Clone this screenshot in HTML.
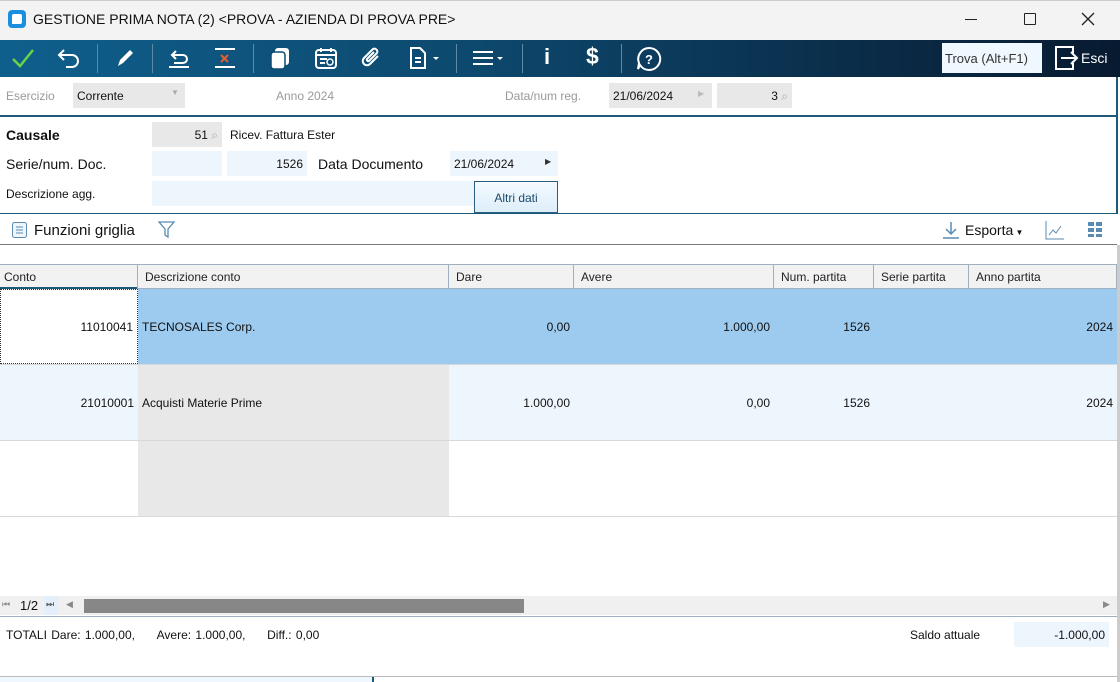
<!DOCTYPE html>
<html><head><meta charset="utf-8"><style>
*{box-sizing:border-box;margin:0;padding:0}
body{width:1120px;height:682px;overflow:hidden;background:#fff;font-family:"Liberation Sans",sans-serif;font-size:12px;color:#111;position:relative}
.a{position:absolute}
.tb{left:0;top:40px;width:1120px;height:37px;background:linear-gradient(90deg,#0f5f8c 0%,#0d4a70 40%,#0a2a45 80%,#081a30 100%)}
.sep{position:absolute;top:4px;width:1px;height:29px;background:#5f8aa6}
.ic{position:absolute;top:6px;color:#fff}
.cell{position:absolute;height:100%;border-right:1px solid #cfcfcf;padding:0 4px;display:flex;align-items:center}
.hd{top:264px;height:25px;left:0;width:1117px;background:#f2f2f2;border-top:1px solid #9fb0c0;border-bottom:1px solid #9fb0c0}
.hd .cell{border-right:1px solid #9fb0c0;color:#222}
.r{left:0;width:1117px;height:76px;border-bottom:1px solid #d8d8d8}
.r .cell{border-right:none}
.R{justify-content:flex-end}
</style></head><body>
<div class="a" style="left:0;top:0;width:1120px;height:40px;background:#f3f3f3;border-top:1px solid #ccc"></div>
<div class="a" style="left:8px;top:10px;width:18px;height:18px;border-radius:4px;background:#1a8fe0"><div style="margin:4px;width:10px;height:10px;background:#fff;border-radius:2px 2px 2px 0"></div></div>
<div class="a" style="left:33px;top:11px;font-size:14px;color:#111">GESTIONE PRIMA NOTA (2) &lt;PROVA - AZIENDA DI PROVA PRE&gt;</div>
<div class="a" style="left:965px;top:19px;width:12px;height:1px;background:#222"></div>
<div class="a" style="left:1024px;top:13px;width:12px;height:12px;border:1.5px solid #222;border-radius:1px"></div>
<svg class="a" style="left:1081px;top:12px" width="14" height="14"><path d="M1 1L13 13M13 1L1 13" stroke="#222" stroke-width="1.3"/></svg>
<div class="a tb">
<svg class="ic" style="left:10px" width="26" height="24"><path d="M3 13l7 7L23 4" stroke="#6cd24a" stroke-width="2.5" fill="none"/></svg>
<svg class="ic" style="left:56px" width="26" height="24"><path d="M8 6L3 11l5 5M3 11h13a6 6 0 0 1 0 12h-6" stroke="#fff" stroke-width="2" fill="none" transform="translate(0,-2)"/></svg>
<div class="sep" style="left:97px"></div>
<svg class="ic" style="left:113px" width="24" height="24"><path d="M5 20l2-6L17 4l3 3L10 17z" fill="#fff"/></svg>
<div class="sep" style="left:152px"></div>
<svg class="ic" style="left:166px" width="26" height="24"><path d="M10 5L6 9l4 4M6 9h11a4 4 0 0 1 0 8H8M3 21h20" stroke="#fff" stroke-width="2" fill="none"/></svg>
<svg class="ic" style="left:212px" width="26" height="24"><path d="M3 3h20M3 21h20" stroke="#fff" stroke-width="2"/><path d="M9 9l7 7M16 9l-7 7" stroke="#e85d2a" stroke-width="2"/></svg>
<div class="sep" style="left:253px"></div>
<svg class="ic" style="left:268px" width="24" height="24"><rect x="7" y="2" width="14" height="17" rx="3" fill="#fff"/><rect x="3" y="6" width="14" height="17" rx="3" fill="#fff" stroke="#0d4a70" stroke-width="1.5"/></svg>
<svg class="ic" style="left:313px" width="26" height="24"><rect x="3" y="4" width="20" height="18" rx="3" stroke="#fff" stroke-width="2" fill="none"/><path d="M3 9h20M8 2v4M18 2v4M7 13h7M7 17h5" stroke="#fff" stroke-width="2"/><circle cx="17" cy="16" r="3" stroke="#fff" stroke-width="1.5" fill="none"/></svg>
<svg class="ic" style="left:360px" width="24" height="24"><path d="M18 10l-8 8a4 4 0 0 1-6-6l9-9a3 3 0 0 1 4 4l-8 8a1.5 1.5 0 0 1-2-2l7-7" stroke="#fff" stroke-width="2" fill="none"/></svg>
<svg class="ic" style="left:407px" width="36" height="24"><path d="M4 2h9l5 5v15H4z" stroke="#fff" stroke-width="2" fill="none"/><path d="M8 12h6M8 16h6" stroke="#fff" stroke-width="2"/><path d="M26 11h6l-3 3z" fill="#fff"/></svg>
<div class="sep" style="left:456px"></div>
<svg class="ic" style="left:471px" width="36" height="24"><path d="M2 6h20M2 12h20M2 18h20" stroke="#fff" stroke-width="2"/><path d="M26 11h6l-3 3z" fill="#fff"/></svg>
<div class="sep" style="left:522px"></div>
<div class="ic" style="left:544px;top:4px;font-size:22px;font-weight:bold">i</div>
<div class="ic" style="left:586px;top:3px;font-size:23px;font-weight:bold">$</div>
<div class="sep" style="left:621px"></div>
<svg class="ic" style="left:636px" width="26" height="26"><path d="M13 2a11 11 0 1 1-9 17l-2 4 1-6A11 11 0 0 1 13 2z" stroke="#fff" stroke-width="2" fill="none"/><text x="9" y="18" fill="#fff" font-size="13" font-weight="bold" font-family="Liberation Sans">?</text></svg>
<div class="a" style="left:942px;top:3px;width:100px;height:30px;background:#f0f8ff;color:#333;font-size:13px;padding:8px 0 0 3px">Trova (Alt+F1)</div>
<svg class="ic" style="left:1053px;top:5px" width="26" height="26"><path d="M10 2H3v22h7M10 2h10v6M10 24h10v-6" stroke="#fff" stroke-width="2" fill="none"/><path d="M8 13h16M18 7l6 6-6 6" stroke="#fff" stroke-width="2" fill="none"/></svg>
<div class="ic" style="left:1081px;top:10px;font-size:14px">Esci</div>
</div>
<div class="a" style="left:6px;top:89px;color:#999">Esercizio</div>
<div class="a" style="left:73px;top:83px;width:112px;height:25px;background:#e8e8e8;padding:6px 4px">Corrente<span style="position:absolute;left:98px;top:5px;color:#aaa;font-size:8px">▼</span></div>
<div class="a" style="left:276px;top:89px;color:#999">Anno 2024</div>
<div class="a" style="left:505px;top:89px;color:#999">Data/num reg.</div>
<div class="a" style="left:609px;top:83px;width:103px;height:25px;background:#e8e8e8;padding:6px 4px">21/06/2024<span style="position:absolute;left:89px;top:6px;color:#bbb;font-size:8px">▶</span></div>
<div class="a" style="left:717px;top:83px;width:75px;height:25px;background:#e8e8e8;padding:6px 4px;text-align:right">3 <span style="color:#aaa">⌕</span></div>
<div class="a" style="left:0;top:115px;width:1117px;height:2px;background:#1d5a7a"></div>
<div class="a" style="left:1116px;top:77px;width:2px;height:137px;background:#1d5a7a"></div>
<div class="a" style="left:6px;top:127px;font-size:14px;font-weight:bold">Causale</div>
<div class="a" style="left:152px;top:122px;width:70px;height:25px;background:#e8e8e8;padding:6px 4px;text-align:right">51 <span style="color:#aaa">⌕</span></div>
<div class="a" style="left:230px;top:128px">Ricev. Fattura Ester</div>
<div class="a" style="left:6px;top:156px;font-size:14px">Serie/num. Doc.</div>
<div class="a" style="left:152px;top:151px;width:70px;height:25px;background:#eef6fd"></div>
<div class="a" style="left:227px;top:151px;width:80px;height:25px;background:#eef6fd;padding:6px 4px;text-align:right">1526</div>
<div class="a" style="left:318px;top:156px;font-size:14px">Data Documento</div>
<div class="a" style="left:450px;top:151px;width:108px;height:25px;background:#eef6fd;padding:6px 4px">21/06/2024<span style="position:absolute;left:95px;top:6px;font-size:8px;color:#333">▶</span></div>
<div class="a" style="left:6px;top:187px">Descrizione agg.</div>
<div class="a" style="left:152px;top:181px;width:322px;height:25px;background:#eef6fd"></div>
<div class="a" style="left:474px;top:181px;width:84px;height:32px;border:1px solid #2b5e7e;background:linear-gradient(#f4faff,#ddeefa);text-align:center;padding-top:9px;color:#1d4a6a">Altri dati</div>
<div class="a" style="left:0;top:213px;width:1118px;height:1px;background:#1d5a7a"></div>
<svg class="a" style="left:11px;top:221px" width="18" height="18"><rect x="1.5" y="1.5" width="14" height="15" rx="2" stroke="#5b8bb0" fill="#eef5fb"/><path d="M5 6h7M5 9h7M5 12h7" stroke="#5b8bb0"/></svg>
<div class="a" style="left:34px;top:222px;font-size:15px">Funzioni griglia</div>
<svg class="a" style="left:158px;top:220px" width="18" height="20"><path d="M1 2h15l-6 7v8l-3-2V9z" stroke="#5b8bb0" fill="none" stroke-width="1.3"/></svg>
<svg class="a" style="left:941px;top:221px" width="20" height="18"><path d="M10 1v12M5 8l5 5 5-5M2 17h16" stroke="#5b8bb0" stroke-width="1.5" fill="none"/></svg>
<div class="a" style="left:965px;top:222px;font-size:14px">Esporta<span style="font-size:8px"> ▼</span></div>
<svg class="a" style="left:1045px;top:220px" width="20" height="20"><path d="M1 1v18h18" stroke="#5b8bb0" fill="none"/><path d="M4 15l4-5 3 3 5-7" stroke="#5b8bb0" fill="none"/></svg>
<svg class="a" style="left:1088px;top:222px" width="16" height="16"><path d="M0 0h6v4H0zM8 0h6v4H8zM0 6h6v4H0zM8 6h6v4H8zM0 12h6v3H0zM8 12h6v3H8z" fill="#5b8bb0"/></svg>
<div class="a" style="left:0;top:244px;width:1117px;height:1px;background:#777"></div>
<div class="a hd">
<div class="cell" style="left:0;width:138px">Conto</div>
<div class="cell" style="left:138px;width:311px;padding-left:7px">Descrizione conto</div>
<div class="cell" style="left:449px;width:125px;padding-left:7px">Dare</div>
<div class="cell" style="left:574px;width:200px;padding-left:7px">Avere</div>
<div class="cell" style="left:774px;width:100px;padding-left:7px">Num. partita</div>
<div class="cell" style="left:874px;width:95px;padding-left:7px">Serie partita</div>
<div class="cell" style="left:969px;width:148px;padding-left:7px">Anno partita</div>
</div>
<div class="a" style="left:0;top:287px;width:137px;height:2px;background:#1d5a7a"></div>
<div class="a r" style="top:289px;background:#9dcbf0">
<div class="cell R" style="left:0;width:138px;background:#fff;border:1px dotted #333">11010041</div>
<div class="cell" style="left:138px;width:311px">TECNOSALES Corp.</div>
<div class="cell R" style="left:449px;width:125px">0,00</div>
<div class="cell R" style="left:574px;width:200px">1.000,00</div>
<div class="cell R" style="left:774px;width:100px">1526</div>
<div class="cell R" style="left:969px;width:148px">2024</div>
</div>
<div class="a r" style="top:365px;background:#eef6fd">
<div class="cell R" style="left:0;width:138px">21010001</div>
<div class="cell" style="left:138px;width:311px;background:#e8e8e8">Acquisti Materie Prime</div>
<div class="cell R" style="left:449px;width:125px">1.000,00</div>
<div class="cell R" style="left:574px;width:200px">0,00</div>
<div class="cell R" style="left:774px;width:100px">1526</div>
<div class="cell R" style="left:969px;width:148px">2024</div>
</div>
<div class="a r" style="top:441px;background:#fff">
<div class="cell" style="left:138px;width:311px;background:#e8e8e8"></div>
</div>
<div class="a" style="left:0;top:596px;width:1117px;height:19px;background:#f0f0f0"></div>
<div class="a" style="left:2px;top:599px;font-size:9px;color:#888">⏮</div>
<div class="a" style="left:20px;top:598px;font-size:13px">1/2</div>
<div class="a" style="left:44px;top:596px;width:14px;height:19px;background:#e3f0fb;font-size:9px;color:#555;padding:3px 2px">⏭</div>
<div class="a" style="left:66px;top:599px;font-size:9px;color:#888">◀</div>
<div class="a" style="left:84px;top:599px;width:440px;height:14px;background:#878787"></div>
<div class="a" style="left:1103px;top:599px;font-size:9px;color:#888">▶</div>
<div class="a" style="left:0;top:616px;width:1117px;height:1px;background:#9fb0c0"></div>
<div class="a" style="left:6px;top:628px;word-spacing:1px">TOTALI Dare: 1.000,00, &nbsp;&nbsp;&nbsp;&nbsp;Avere: 1.000,00, &nbsp;&nbsp;&nbsp;&nbsp;Diff.: 0,00</div>
<div class="a" style="left:910px;top:628px">Saldo attuale</div>
<div class="a" style="left:1014px;top:622px;width:95px;height:25px;background:#eef6fd;padding:6px 4px;text-align:right">-1.000,00</div>
<div class="a" style="left:0;top:676px;width:1117px;height:1px;background:#bbb"></div>
<div class="a" style="left:0;top:677px;width:372px;height:5px;background:#f0f8ff"></div>
<div class="a" style="left:372px;top:677px;width:2px;height:5px;background:#1d5a7a"></div>
<div class="a" style="left:1117px;top:245px;width:3px;height:437px;background:#ccc"></div>
</body></html>
